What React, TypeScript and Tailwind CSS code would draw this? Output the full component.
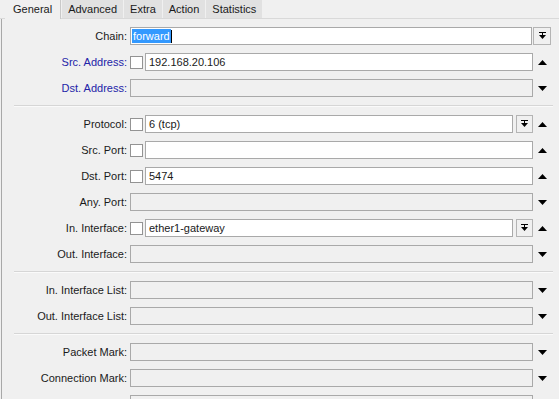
import React from 'react';

type Row = {
  label: string;
  blue?: boolean;
  check?: boolean;
  value?: string;
  enabled?: boolean;
  button?: boolean;
  arrow?: 'up' | 'down';
};

const tabs = ['General', 'Advanced', 'Extra', 'Action', 'Statistics'];

const groups: Row[][] = [
  [
    { label: 'Src. Address:', blue: true, check: true, value: '192.168.20.106', enabled: true, arrow: 'up' },
    { label: 'Dst. Address:', blue: true, arrow: 'down' },
  ],
  [
    { label: 'Protocol:', check: true, value: '6 (tcp)', enabled: true, button: true, arrow: 'up' },
    { label: 'Src. Port:', check: true, value: '', enabled: true, arrow: 'up' },
    { label: 'Dst. Port:', check: true, value: '5474', enabled: true, arrow: 'up' },
    { label: 'Any. Port:', arrow: 'down' },
    { label: 'In. Interface:', check: true, value: 'ether1-gateway', enabled: true, button: true, arrow: 'up' },
    { label: 'Out. Interface:', arrow: 'down' },
  ],
  [
    { label: 'In. Interface List:', arrow: 'down' },
    { label: 'Out. Interface List:', arrow: 'down' },
  ],
  [
    { label: 'Packet Mark:', arrow: 'down' },
    { label: 'Connection Mark:', arrow: 'down' },
    // next row is cut off by the window, only its box top shows
    { label: '', arrow: 'down' },
  ],
];

function DropButton({ wide }: { wide?: boolean }) {
  return (
    <div
      className={`h-[18px] ${wide ? 'w-[18px]' : 'w-[17px]'} shrink-0 border border-[#b4b4b4] bg-[#f0f0f0] flex items-center justify-center`}
    >
      <svg width="7" height="8" viewBox="0 0 7 8">
        <rect x="0" y="0" width="7" height="1" fill="#000" />
        <rect x="3" y="1" width="1" height="3" fill="#000" />
        <polygon points="0,3 7,3 3.5,7" fill="#000" />
      </svg>
    </div>
  );
}

function Arrow({ dir }: { dir: 'up' | 'down' }) {
  return (
    <div className="w-[18px] h-[18px] shrink-0 flex items-center justify-center">
      <svg width="9" height="5" viewBox="0 0 9 5">
        {dir === 'up' ? (
          <polygon points="0,5 9,5 4.5,0" fill="#000" />
        ) : (
          <polygon points="0,0 9,0 4.5,5" fill="#000" />
        )}
      </svg>
    </div>
  );
}

function Label({ text, blue }: { text: string; blue?: boolean }) {
  return (
    <div className={`w-[125px] shrink-0 text-right whitespace-nowrap ${blue ? 'text-[#2323a8]' : 'text-[#1a1a1a]'}`}>
      {text}
    </div>
  );
}

function FieldRow({ row }: { row: Row }) {
  return (
    <div className="flex items-center h-[18px]">
      <Label text={row.label} blue={row.blue} />
      <div className="ml-[3px] w-[403px] flex items-center">
        {row.check && <div className="w-[13px] h-[13px] shrink-0 border border-[#939393] bg-white mr-[2px]" />}
        <div
          className={`flex-1 h-[18px] border border-[#a9a9a9] flex items-center pl-[3px] whitespace-nowrap ${
            row.enabled ? 'bg-white' : 'bg-[#f0f0f0]'
          }`}
        >
          {row.value}
        </div>
        {row.button && (
          <div className="ml-[3px]">
            <DropButton />
          </div>
        )}
      </div>
      {row.arrow && <Arrow dir={row.arrow} />}
    </div>
  );
}

function Separator() {
  return <div className="h-[2px] ml-[12px] w-[539px] border-t border-[#d6d6d6] border-b border-b-[#fafafa]" />;
}

export default function App() {
  return (
    <div className="w-[559px] h-[399px] overflow-hidden bg-[#f0f0f0] font-['Liberation_Sans',Arial,sans-serif] text-[11px] text-[#1a1a1a]">
      {/* tab strip */}
      <div className="flex h-[19px] pl-[5px] border-b border-[#d9d9d9]">
        {tabs.map((t, i) =>
          i === 0 ? (
            <div
              key={t}
              className="relative z-10 h-[19px] px-2 flex items-center bg-[#f0f0f0] border-r border-[#c9c9c9]"
            >
              {t}
            </div>
          ) : (
            <div key={t} className="h-[18px] px-[6px] ml-px flex items-center bg-[#e1e1e1]">
              {t}
            </div>
          )
        )}
      </div>

      {/* general panel */}
      <div className="ml-px border-l border-[#a8a8a8] h-[380px] pt-2 flex flex-col gap-2">
        <div className="flex items-center h-[18px]">
          <Label text="Chain:" />
          <div className="ml-[3px] w-[421px] flex items-center">
            <div className="flex-1 h-[18px] border border-[#a9a9a9] bg-white flex items-center pl-px">
              <span className="bg-[#3399ff] text-white h-[14px] leading-[14px] px-px">forward</span>
              <span className="w-px h-[13px] bg-black" />
            </div>
            <div className="ml-px">
              <DropButton wide />
            </div>
          </div>
        </div>
        {groups.map((g, gi) => (
          <React.Fragment key={gi}>
            {gi > 0 && <Separator />}
            {g.map((r, ri) => (
              <FieldRow key={gi + '-' + ri} row={r} />
            ))}
          </React.Fragment>
        ))}
      </div>
    </div>
  );
}
